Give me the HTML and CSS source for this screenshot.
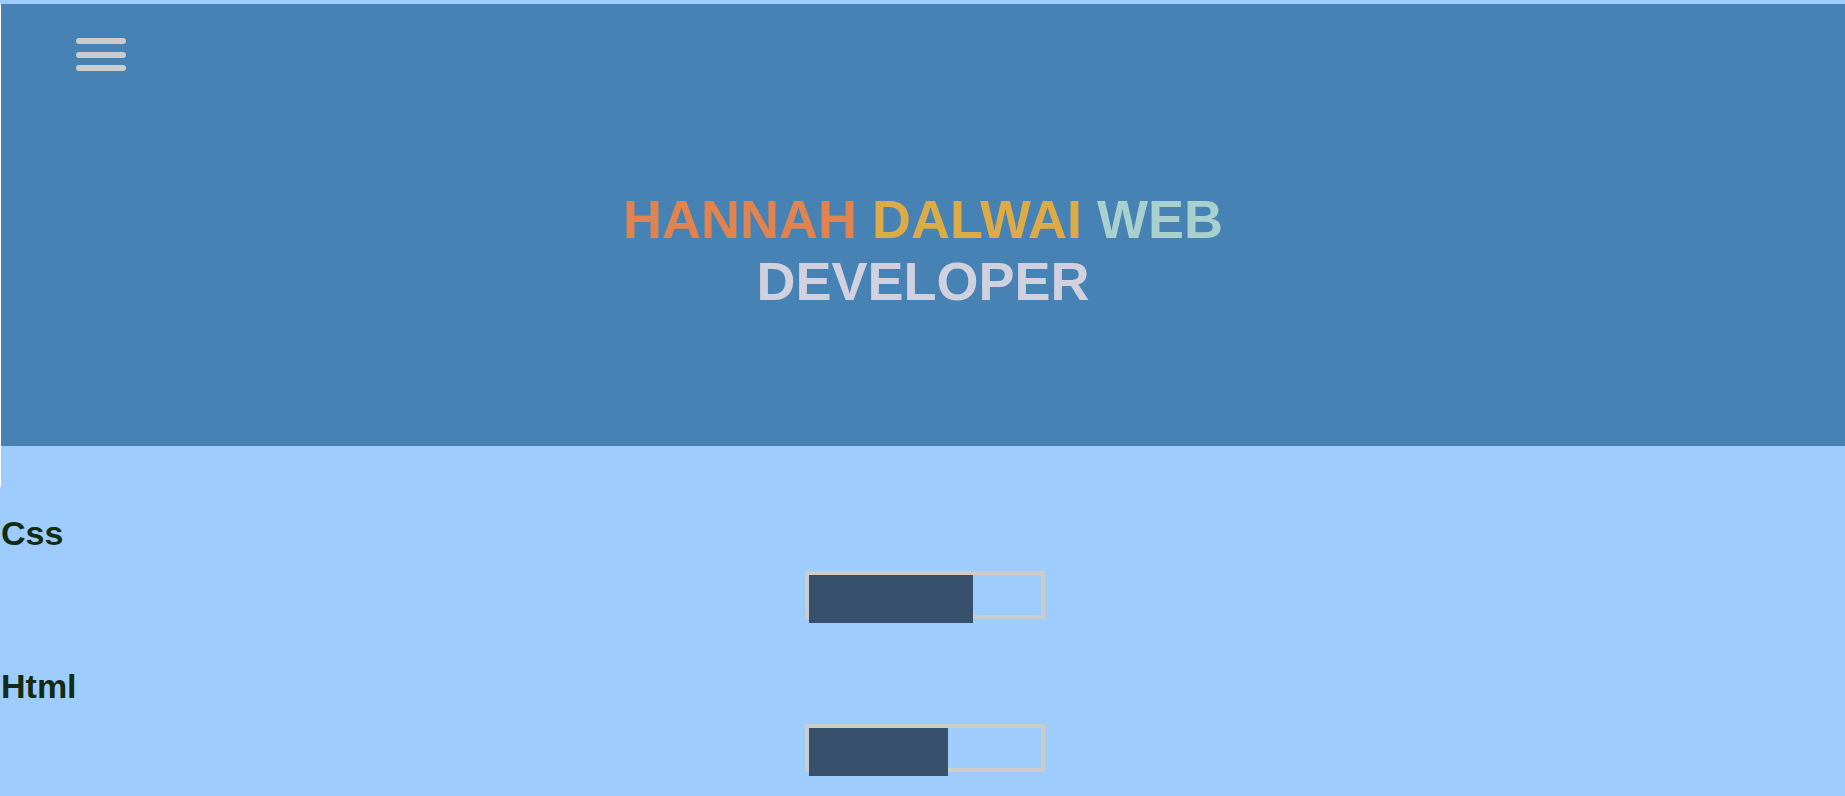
FILE: index.html
```html
<!DOCTYPE html>
<html lang="en">
<head>
<meta charset="utf-8">
<title>Hannah Dalwai</title>
<link rel="stylesheet" href="styles.css">
</head>
<body>
<div class="sidenav"></div>
<header class="hero">
  <button class="menu-btn" aria-label="Menu">
    <span class="bar"></span>
    <span class="bar"></span>
    <span class="bar"></span>
  </button>
  <h1 class="title">
    <span class="c-first">HANNAH</span> <span class="c-last">DALWAI</span> <span class="c-web">WEB</span><br><span class="c-dev">DEVELOPER</span>
  </h1>
</header>
<main class="skills">
  <section class="skill">
    <h2 class="skill-name">Css</h2>
    <div class="meter"><div class="meter-fill" style="width: 70.7%"></div></div>
  </section>
  <section class="skill">
    <h2 class="skill-name">Html</h2>
    <div class="meter"><div class="meter-fill" style="width: 60%"></div></div>
  </section>
</main>
</body>
</html>
```
FILE: styles.css
```css
html, body {
  margin: 0;
  padding: 0;
}
body {
  background: #9ecdfd;
  font-family: "Liberation Sans", Arial, sans-serif;
  padding-top: 4px;
  overflow: hidden;
}
.sidenav {
  position: absolute;
  left: 0;
  top: 4px;
  width: 1px;
  height: 483px;
  background: #ffffff;
}
.hero {
  background: #4682b4;
  margin-left: 1px;
  height: 442px;
  box-sizing: border-box;
  padding-top: 34px;
}
.menu-btn {
  display: flex;
  flex-direction: column;
  gap: 7.5px;
  margin-left: 75px;
  padding: 0;
  border: 0;
  background: none;
  cursor: pointer;
}
.bar {
  display: block;
  width: 50px;
  height: 6px;
  border-radius: 3px;
  background: #cccccc;
}
.title {
  margin: 117px 0 0;
  text-align: center;
  font-family: "Liberation Sans", Arial, sans-serif;
  font-weight: bold;
  font-size: 54px;
  line-height: 62px;
}
.c-first { color: #e0834f; }
.c-last { color: #dcab45; }
.c-web { color: #a8d0cf; }
.c-dev { color: #d0d0de; }
.skills {
  padding-top: 67px;
  padding-left: 1px;
}
.skill {
  margin-bottom: 47px;
}
.skill-name {
  margin: 0 0 18px;
  font-size: 34px;
  line-height: 40px;
  font-weight: bold;
  color: #112b14;
}
.meter {
  width: 232px;
  height: 40px;
  border: 4px solid #cccccc;
  margin: 0 auto;
  position: relative;
  left: 2px;
}
.meter-fill {
  height: 48px;
  background: #37506b;
}
```
